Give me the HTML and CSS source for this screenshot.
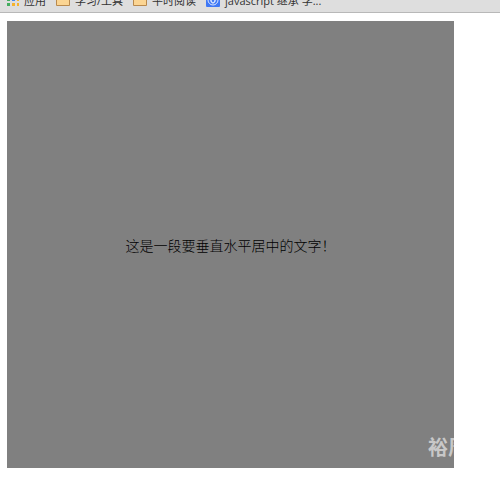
FILE: index.html
```
<!DOCTYPE html>
<html lang="zh-CN">
<head>
    <meta charset="UTF-8">
    <meta name="viewport" content="width=device-width, initial-scale=1.0">
    <title>垂直水平居中</title>
    <link rel="stylesheet" href="styles.css">
</head>
<body>
    <nav class="bookmarks">
        <a href="#">
            <svg class="icon" viewBox="0 0 12 14">
                <path fill="#e8504a" d="M0 0h3v3H0z"/>
                <path fill="#e8504a" d="M5 0h3v3H5z"/>
                <path fill="#f5b32f" d="M10 0h2v3h-2z"/>
                <path fill="#43ad5f" d="M0 5h3v3H0z"/>
                <path fill="#4489f0" d="M5 5h3v3H5z"/>
                <path fill="#f5b32f" d="M10 5h2v3h-2z"/>
                <path fill="#43ad5f" d="M0 10h3v3H0z"/>
                <path fill="#f5b32f" d="M5 10h3v3H5zM10 10h2v3h-2z"/>
            </svg>
            <span>应用</span>
        </a>
        <a href="#">
            <svg class="icon folder" viewBox="0 0 14 14">
                <path fill="#fbd593" stroke="#b98a4e" d="M.5 12.500V2.500h5l2 2h6v8z"/>
            </svg>
            <span>学习/工具</span>
        </a>
        <a href="#">
            <svg class="icon folder" viewBox="0 0 14 14">
                <path fill="#fbd593" stroke="#b98a4e" d="M.5 12.500V2.500h5l2 2h6v8z"/>
            </svg>
            <span>平时阅读</span>
        </a>
        <a href="#">
            <svg class="icon folder" viewBox="0 0 14 14">
                <rect width="14" height="14" rx="1" fill="#3f78f5"/>
                <circle cx="7" cy="7" r="5" fill="none" stroke="#dce7ff"/>
                <path fill="none" stroke="#dce7ff" stroke-width="1.500" d="M5 5v3q2 4 4 0V5M7 4v3"/>
            </svg>
            <span>javascript 继承 学...</span>
        </a>
    </nav>
    <main class="page">
        <div class="box">
            <p>这是一段要垂直水平居中的文字！</p>
            <span class="watermark">裕周</span>
        </div>
    </main>
</body>
</html>
```
FILE: styles.css
```
body {
    margin: 0;
    background-color: #fff;
    font-family: "Liberation Sans", "Noto Sans CJK SC", sans-serif;
    color: #000;
}

.bookmarks {
    display: flex;
    gap: 10px;
    height: 12px;
    padding-left: 7px;
    background-color: #dedede;
    border-bottom: 1px solid #b8b8b8;
    overflow: hidden;
}

.bookmarks a {
    display: flex;
    align-items: center;
    gap: 5px;
    height: 16px;
    margin-top: -8px;
    color: #333;
    font-family: "Open Sans", "Noto Sans CJK SC", sans-serif;
    font-size: 11px;
    line-height: 18px;
    white-space: nowrap;
    text-decoration: none;
}

.bookmarks span {
    padding-top: 2px;
}

.icon {
    width: 12px;
    height: 14px;
}

.folder {
    width: 14px;
}

.page {
    padding: 8px 46px 18px 7px;
}

.box {
    display: flex;
    align-items: center;
    justify-content: center;
    position: relative;
    aspect-ratio: 1;
    background-color: #808080;
    overflow: hidden;
}

.box p {
    margin: 0;
    font-family: "Noto Sans CJK SC", sans-serif;
    font-size: 14px;
    font-weight: 300;
    line-height: 20px;
}

.watermark {
    position: absolute;
    right: -14px;
    bottom: 8px;
    color: #c8c8c8;
    font-size: 20px;
    font-weight: bold;
    line-height: 24px;
}
```
